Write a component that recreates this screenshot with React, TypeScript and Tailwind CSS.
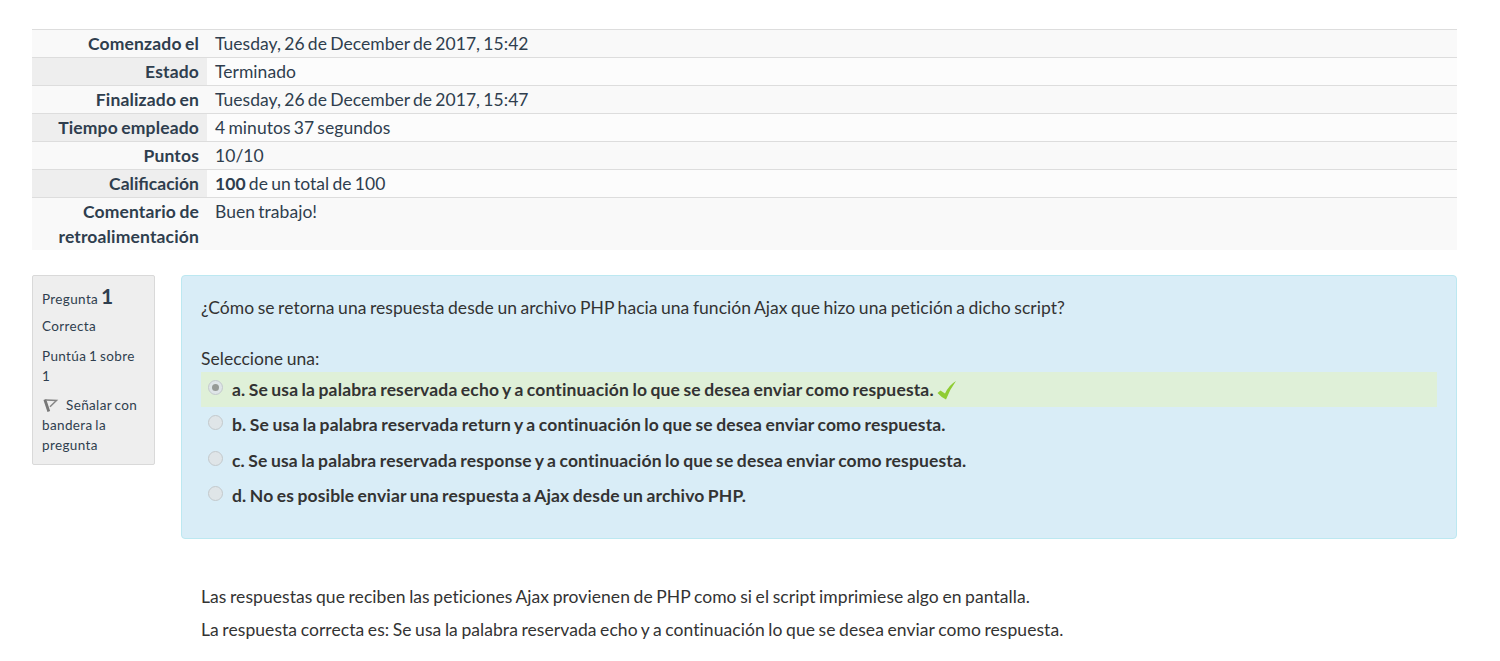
import type { ReactNode } from "react";

const rows: { label: string; value: ReactNode }[] = [
  { label: "Comenzado el", value: "Tuesday, 26 de December de 2017, 15:42" },
  { label: "Estado", value: "Terminado" },
  { label: "Finalizado en", value: "Tuesday, 26 de December de 2017, 15:47" },
  { label: "Tiempo empleado", value: "4 minutos 37 segundos" },
  { label: "Puntos", value: "10/10" },
  { label: "Calificación", value: <><b>100</b> de un total de 100</> },
  { label: "Comentario de retroalimentación", value: "Buen trabajo!" },
];

const options = [
  { text: "a. Se usa la palabra reservada echo y a continuación lo que se desea enviar como respuesta.", checked: true },
  { text: "b. Se usa la palabra reservada return y a continuación lo que se desea enviar como respuesta.", checked: false },
  { text: "c. Se usa la palabra reservada response y a continuación lo que se desea enviar como respuesta.", checked: false },
  { text: "d. No es posible enviar una respuesta a Ajax desde un archivo PHP.", checked: false },
];

function Radio({ checked }: { checked: boolean }) {
  return (
    <span className="mt-2 flex size-[15px] shrink-0 items-center justify-center rounded-full border border-[#c3c9cc] bg-[#dfe5e8]">
      {checked && <span className="size-[7px] rounded-full bg-[#979b97]" />}
    </span>
  );
}

export default function App() {
  return (
    <div className="h-[661px] overflow-hidden bg-white pl-8 pr-[43px] pt-[29px] font-['Lato',sans-serif] text-[17.5px] leading-[25px] tracking-[0.04px] text-[#2f3e4e] [word-spacing:-1px]">
      <table className="w-full border-collapse">
        <tbody>
          {rows.map((r, i) => (
            <tr key={r.label} className="border-t border-[#dddddd] align-top">
              <th className={"w-[175px] p-px px-2 text-right font-bold " + (r.label === "Calificación" ? "tracking-normal " : "tracking-[0.15px] ") + (i % 2 ? "bg-[#eeeeee]" : "bg-[#f9f9f9]")}>{r.label}</th>
              <td className={"px-2 py-px [word-spacing:-1.3px] " + (i % 2 ? "bg-[#fcfcfc]" : "bg-[#f9f9f9]")}>{r.value}</td>
            </tr>
          ))}
        </tbody>
      </table>
      <div className="mt-[25px] flex items-start">
        <aside className="h-[190px] w-[123px] shrink-0 rounded-[2px] border border-[#d9d9d9] bg-[#eeeeee] pl-[9px] pr-3 pt-2 text-[13.5px] leading-5 tracking-[0.36px]">
          <h3 className="h-6 leading-6">Pregunta <b className="text-[21px]">1</b></h3>
          <div className="mt-2">Correcta</div>
          <div className="mt-[10px]">Puntúa 1 sobre<br />1</div>
          <div className="mt-[9px]">
            <svg className="mr-[7px] inline-block size-[17px] align-[-4px]" viewBox="0 0 17 17">
              <path d="M2.8 2.5L6.8 14.5" stroke="#777" strokeWidth="2.8" fill="none" />
              <path d="M4 3L14.5 3.5L8 9.8" stroke="#858585" strokeWidth="1.5" fill="none" />
            </svg>
            Señalar con bandera la pregunta
          </div>
        </aside>
        <main className="ml-[26px] flex-1">
          <section className="h-[264px] rounded-[4px] border border-[#bce8f1] bg-[#d9edf7] px-[19px] pt-[19px] text-[#333333]">
            <p>¿Cómo se retorna una respuesta desde un archivo PHP hacia una función Ajax que hizo una petición a dicho script?</p>
            <p className="mt-[26px]">Seleccione una:</p>
            <div className="mt-px">
              {options.map((o) => (
                <label key={o.text} className={"flex h-[35.3px] pl-[7px] font-bold " + (o.checked ? "bg-[#dff0d8]" : "")}>
                  <Radio checked={o.checked} />
                  <span className="ml-[9px] pt-[5px] tracking-[0.145px]">{o.text}</span>
                  {o.checked && (
                    <svg className="ml-[3px] mt-[8px] size-5" viewBox="0 0 20 20">
                      <path d="M0.5 13L3.5 10.5L8 13.5Q12 5 19 1Q13 9 9 19.5Q4 17 0.5 13Z" fill="#8fcc33" />
                    </svg>
                  )}
                </label>
              ))}
            </div>
          </section>
          <section className="px-5 pt-[45px] tracking-[0.066px] text-[#333333]">
            <p>Las respuestas que reciben las peticiones Ajax provienen de PHP como si el script imprimiese algo en pantalla.</p>
            <p className="mt-2">La respuesta correcta es: Se usa la palabra reservada echo y a continuación lo que se desea enviar como respuesta.</p>
          </section>
        </main>
      </div>
    </div>
  );
}
